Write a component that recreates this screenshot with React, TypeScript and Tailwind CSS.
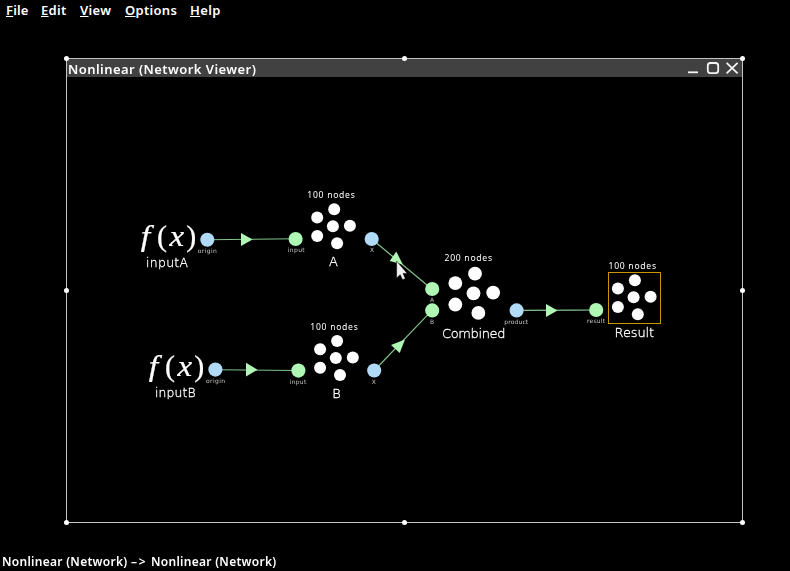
import React from "react";

type Point = [number, number];

const OFFSETS: Point[] = [
  [1.3, -17],
  [-15.7, -8.8],
  [0, 0],
  [17, -0.6],
  [-15.7, 9.7],
  [4.2, 17],
];

function Label({ x, y, w, size, children, className = "fill-white" }: { x: number; y: number; w: number; size: number; children: string; className?: string }) {
  return (
    <text x={x} y={y} fontSize={size} textLength={w} className={className}>
      {children}
    </text>
  );
}

function Ensemble({ x, y, r = 6, scale = 1 }: { x: number; y: number; r?: number; scale?: number }) {
  return (
    <g className="fill-white">
      {OFFSETS.map(([dx, dy], i) => (
        <circle key={i} cx={x + dx * scale} cy={y + dy * scale} r={r} />
      ))}
    </g>
  );
}

function FunctionIcon({ x, y }: { x: number; y: number }) {
  return (
    <g transform={`translate(${x} ${y})`} className="fill-white stroke-white font-['Liberation_Serif',serif] font-normal" strokeWidth=".25">
      <text transform="translate(.8 20.8) scale(1.15 1)" fontSize="29.5" className="italic">f</text>
      <text x="17" y="21.2" fontSize="30">(</text>
      <text transform="translate(29.6 21.2) scale(1.15 1)" fontSize="28.5" className="italic">x</text>
      <text x="46.2" y="21.2" fontSize="30">)</text>
    </g>
  );
}

const LINKS: [Point, Point][] = [
  [[207.5, 239.7], [295.7, 238.8]],
  [[371.7, 239], [432, 289.2]],
  [[215.3, 369.7], [298.4, 370.5]],
  [[374.3, 370.5], [432, 310.4]],
  [[516.5, 310.4], [596.3, 310]],
];

const ARROWS = [
  "241,233 252.5,239.5 241,246",
  "246,362.7 257.5,369.7 246,376.4",
  "546,304 557.5,310.6 546,317",
  "396.3,251.5 389.7,261 402.8,264.5",
  "405,339.5 391,345 399.7,353",
];

const PORTS: [number, number, "source" | "sink"][] = [
  [207.3, 239.8, "source"],
  [295.6, 239, "sink"],
  [371.7, 239, "source"],
  [432.2, 289, "sink"],
  [432.2, 310.4, "sink"],
  [516.6, 310.4, "source"],
  [596.2, 310, "sink"],
  [215.4, 369.6, "source"],
  [298.4, 370.6, "sink"],
  [374.2, 370.5, "source"],
];

const PORT_LABELS: [string, number, number, number][] = [
  ["origin", 197.8, 253, 19],
  ["input", 287.7, 252.2, 17],
  ["X", 370, 252.2, 4],
  ["A", 430, 302.2, 4],
  ["B", 430, 324, 4],
  ["product", 504.2, 324, 24],
  ["result", 587, 323.2, 18],
  ["origin", 206, 383, 19],
  ["input", 289.8, 384, 16.5],
  ["X", 371.7, 384, 4],
];

function Network() {
  return (
    <svg width="675" height="445" viewBox="67 77 675 445" className="block font-['DejaVu_Sans',sans-serif] will-change-transform">
      <g className="stroke-[#82c48a]" strokeWidth="1.15">
        {LINKS.map(([a, b], i) => (
          <line key={i} x1={a[0]} y1={a[1]} x2={b[0]} y2={b[1]} />
        ))}
      </g>
      {ARROWS.map((points) => (
        <polygon key={points} points={points} className="fill-[#b0f7b5]" />
      ))}
      {PORTS.map(([x, y, kind]) => (
        <circle key={`${x}-${y}`} cx={x} cy={y} r="7.05" className={kind === "source" ? "fill-[#b0daf5]" : "fill-[#b0f7b5]"} />
      ))}
      {PORT_LABELS.map(([text, x, y, w]) => (
        <Label key={`${x}-${y}`} x={x} y={y} w={w} size={6} className="fill-[#c4c4c4]">
          {text}
        </Label>
      ))}

      <FunctionIcon x={140} y={225} />
      <FunctionIcon x={148} y={355} />
      <Ensemble x={332.9} y={226.3} />
      <Ensemble x={335.8} y={358} />
      <Ensemble x={473.5} y={293.3} r={6.9} scale={1.157} />
      <Ensemble x={633.6} y={297.3} />
      <rect x="608.5" y="272.5" width="52" height="51" className="fill-none stroke-[#c99700]" />

      <g className="font-['Noto_Sans',sans-serif]">
        <Label x={307.3} y={198} w={47.5} size={8.6}>100 nodes</Label>
        <Label x={310.3} y={330} w={47.5} size={8.6}>100 nodes</Label>
        <Label x={444.5} y={261} w={47.5} size={8.6}>200 nodes</Label>
        <Label x={608.5} y={269} w={47.5} size={8.6}>100 nodes</Label>
      </g>
      <g className="stroke-white font-extralight" strokeWidth=".3">
        <Label x={146} y={267} w={42} size={12.4}>inputA</Label>
        <Label x={155} y={397} w={40.5} size={12.4}>inputB</Label>
        <Label x={329} y={266} w={9} size={13}>A</Label>
        <Label x={332.2} y={398} w={9} size={13}>B</Label>
        <Label x={442} y={338} w={63.5} size={13}>Combined</Label>
        <Label x={614.6} y={337} w={39.5} size={13}>Result</Label>
      </g>

      <path d="M396.6 261V278L400.2 274.7L402.6 279.8L405.3 278.5L403 273.4H407.2Z" className="fill-[#f0f0f0] stroke-black" strokeWidth=".5" />
    </svg>
  );
}

const MENU = [
  { name: "File", className: "w-[35px] tracking-[0.15px]" },
  { name: "Edit", className: "w-[39px] tracking-[0.3px]" },
  { name: "View", className: "w-[45px] tracking-[0.3px]" },
  { name: "Options", className: "w-[65px] tracking-[0.3px]" },
  { name: "Help", className: "tracking-[0.4px]" },
];

const HANDLES = [
  "-left-[3.5px] -top-[3.5px]",
  "left-[334.5px] -top-[3.5px]",
  "-right-[3px] -top-[3.5px]",
  "-left-[3.5px] top-[228.5px]",
  "-right-[3px] top-[228.5px]",
  "-left-[3.5px] -bottom-[3px]",
  "left-[334.5px] -bottom-[3px]",
  "-right-[3px] -bottom-[3px]",
];

export default function App() {
  return (
    <div className="flex h-[571px] w-[790px] flex-col overflow-hidden bg-black font-['Noto_Sans','DejaVu_Sans',sans-serif] text-[13px] text-white">
      <nav className="flex h-[58px] pl-[6px] pt-[1px] font-semibold leading-[19px]">
        {MENU.map(({ name, className }) => (
          <span key={name} className={className}>
            <span className="underline decoration-1 underline-offset-1">{name[0]}</span>
            {name.slice(1)}
          </span>
        ))}
      </nav>
      <section className="relative ml-[66px] h-[465px] w-[677px] border border-[#c4c4c4]">
        <header className="flex h-[18px] items-center justify-between bg-[#414141] pl-px will-change-transform">
          <h1 className="whitespace-nowrap pt-[2px] text-[13px] font-semibold leading-4 tracking-[0.44px]">Nonlinear (Network Viewer)</h1>
          <svg width="56" height="18" viewBox="686 59 56 18" className="fill-none stroke-[#f4f4f4]" strokeWidth="1.8">
            <path d="M688 72.3H698" />
            <rect x="707.8" y="63" width="10.4" height="10.2" rx="2.6" />
            <path d="M726.6 62.8L737.6 73.3M737.6 62.8L726.6 73.3" />
          </svg>
        </header>
        <Network />
        {HANDLES.map((place) => (
          <i key={place} className={`absolute size-[5.5px] rounded-full bg-white ${place}`} />
        ))}
      </section>
      <footer className="mt-auto h-[19px] whitespace-nowrap pl-[2px] text-[12px] font-semibold leading-[19px] tracking-[0.28px] will-change-transform">
        Nonlinear (Network) <span className="tracking-[1.9px]">–&gt;</span> Nonlinear (Network)
      </footer>
    </div>
  );
}
